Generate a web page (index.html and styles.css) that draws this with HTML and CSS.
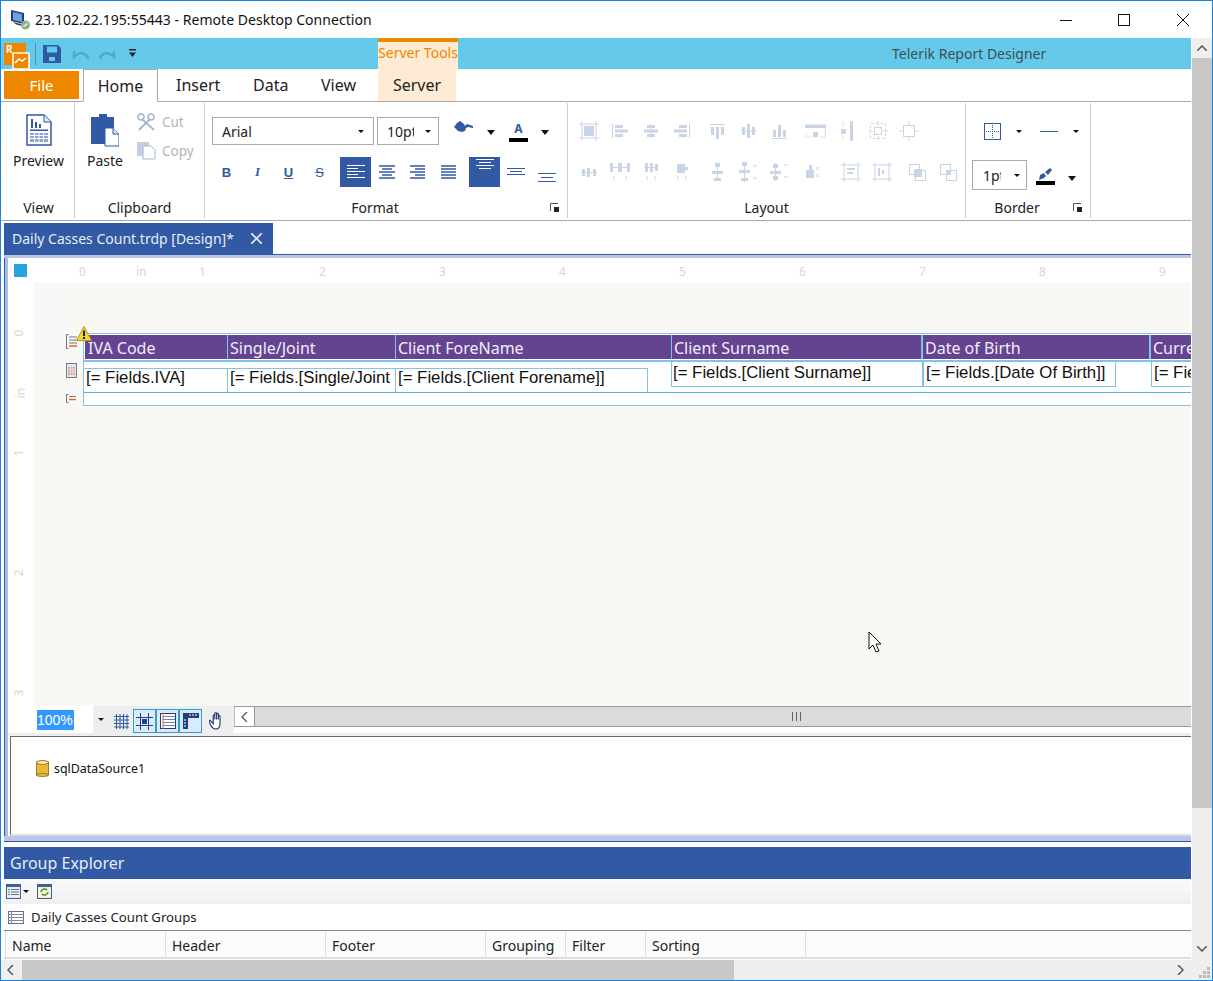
FILE: index.html
```html
<!DOCTYPE html>
<html lang="en">

<head>
    <meta charset="UTF-8">
    <title>23.102.22.195:55443 - Remote Desktop Connection</title>
    <link rel="stylesheet" href="styles.css">
</head>

<body>
    <div class="window">
        <div class="titlebar">
            <svg class="rdp-icon" width="20" height="20" viewBox="0 0 20 20">
                <path d="M0 0l13 3v11L0 11z" fill="#1d3f7c" />
                <path d="M2 2l9 2v8L2 10z" fill="#6f9fe0" />
                <path d="M2 12l10 2.500 3 2.500-10-2.500z" fill="#444" />
                <circle cx="14.500" cy="15" r="4.500" fill="#8fb08a" />
                <path d="M12.500 16.500l4-3" stroke="#fff" stroke-width="1.200" />
            </svg>
            <span class="title-text">23.102.22.195:55443 - Remote Desktop Connection</span>
            <div class="win-btns">
                <svg width="12" height="12" viewBox="0 0 12 12"><path d="M0 6.500h12" stroke="#111" /></svg>
                <svg width="12" height="12" viewBox="0 0 12 12"><rect x=".5" y=".5" width="11" height="11" fill="none" stroke="#111" /></svg>
                <svg class="win-close" width="12" height="12" viewBox="0 0 12 12"><path d="M0 0l12 12M12 0L0 12" stroke="#111" /></svg>
            </div>
        </div>

        <div class="main">
            <div class="app">
                <div class="qat">
                    <div class="qat-left">
                        <svg class="logo" width="26" height="27" viewBox="0 0 26 27">
                            <rect width="22" height="22" fill="#ee8700" />
                            <text x="2" y="10" class="logo-r">R</text>
                            <rect x="9" y="10" width="16" height="16" fill="#ee8700" stroke="#fff" stroke-width="1.500" />
                            <path d="M11 20l4-4 3 2 4-3" fill="none" stroke="#fff" stroke-width="1.500" />
                        </svg>
                        <span class="qat-sep"></span>
                        <svg width="18" height="18" viewBox="0 0 18 18">
                            <path d="M0 0h15l3 3v15H0z" fill="#3259a3" />
                            <rect x="4" y="1.500" width="10" height="6" fill="#65c9ea" />
                            <rect x="6" y="12" width="6" height="4" fill="#65c9ea" />
                        </svg>
                        <svg class="qat-undo" width="18" height="12" viewBox="0 0 18 12">
                            <path d="M17 11c-1-5-6-8-12-4L3 9V3" fill="none" stroke="#3f8fc4" stroke-width="2.500" />
                        </svg>
                        <svg class="qat-redo" width="18" height="12" viewBox="0 0 18 12">
                            <path d="M1 11c1-5 6-8 12-4l2 2V3" fill="none" stroke="#3f8fc4" stroke-width="2.500" />
                        </svg>
                        <svg class="qat-more" width="7" height="9" viewBox="0 0 7 9">
                            <path d="M0 0h7v1.500H0zM0 3.500h7L3.500 8z" fill="#222" />
                        </svg>
                    </div>
                    <div class="ctx-label">Server Tools</div>
                    <div class="app-title">Telerik Report Designer</div>
                </div>

                <div class="tabs">
                    <div class="tab-file">File</div>
                    <div class="tab tab-active">Home</div>
                    <div class="tab tab-insert">Insert</div>
                    <div class="tab tab-data">Data</div>
                    <div class="tab tab-view">View</div>
                    <div class="tab tab-server">Server</div>
                </div>

                <div class="ribbon">
                    <div class="group group-view">
                        <div class="group-body big-btn">
                            <svg width="26" height="32" viewBox="0 0 26 32">
                                <path d="M1 1h17l7 7v23H1z" fill="#fff" stroke="#3259a3" stroke-width="1.500" />
                                <path d="M18 1v7h7" fill="#dfe6f3" stroke="#3259a3" />
                                <path d="M5 5v9h2V5zM9 8v6h2V8zM13 10v4h2v-4z" fill="#3259a3" />
                                <path d="M4 15.500h18v1.500H4z" fill="#3259a3" />
                                <path d="M4 19h18v9H4z" fill="#8ba3d0" />
                                <path d="M4 21.500h18M4 24.500h18M8.500 19v9M13 19v9M17.500 19v9" stroke="#fff" />
                            </svg>
                            <span>Preview</span>
                        </div>
                        <div class="group-label">View</div>
                    </div>

                    <div class="group group-clip">
                        <div class="group-body clip-body">
                            <div class="big-btn paste-btn">
                                <svg width="28" height="33" viewBox="0 0 28 33">
                                    <path d="M0 3h8V0h8v3h7v27H0z" fill="#3259a3" />
                                    <path d="M14 14h8l6 6v12H14z" fill="#fff" stroke="#3259a3" />
                                    <path d="M22 14v6h6" fill="#dfe6f3" stroke="#3259a3" />
                                </svg>
                                <span>Paste</span>
                            </div>
                            <div class="clip-small">
                                <div class="small-btn">
                                    <svg width="19" height="18" viewBox="0 0 19 18">
                                        <circle cx="4" cy="4" r="3" fill="none" stroke="#a4b4d4" stroke-width="1.500" />
                                        <circle cx="14" cy="4" r="3" fill="none" stroke="#a4b4d4" stroke-width="1.500" />
                                        <path d="M5 6l12 11M13 6L2 17" stroke="#a4b4d4" stroke-width="1.800" />
                                    </svg>
                                    <span>Cut</span>
                                </div>
                                <div class="small-btn">
                                    <svg width="19" height="18" viewBox="0 0 19 18">
                                        <rect x="0" y="0" width="12" height="14" fill="#c4cfe4" />
                                        <path d="M6 4h8l4 4v9H6z" fill="#fff" stroke="#a4b4d4" />
                                    </svg>
                                    <span>Copy</span>
                                </div>
                            </div>
                        </div>
                        <div class="group-label">Clipboard</div>
                    </div>

                    <div class="group group-format">
                        <div class="group-body format-body">
                            <div class="format-row1">
                                <div class="combo combo-font"><span>Arial</span><i class="caret-sm"></i></div>
                                <div class="combo combo-size"><span>10pt</span><i class="caret-sm"></i></div>
                                <div class="color-btn color-fill">
                                    <svg width="20" height="14" viewBox="0 0 20 14">
                                        <path d="M0 6l3-4 3-2 4 3 1 2 2-2 6 2v2l-5-1-2 1-1 3-3 1-4-1z" fill="#3259a3" />
                                    </svg>
                                    <i class="caret"></i>
                                </div>
                                <div class="color-btn color-font">
                                    <div class="a-wrap">
                                        <span class="a-mark">A</span>
                                        <span class="color-bar"></span>
                                    </div>
                                    <i class="caret"></i>
                                </div>
                            </div>
                            <div class="format-row2">
                                <div class="fmt-set fmt-style">
                                    <div class="fmt fmt-b">B</div>
                                    <div class="fmt fmt-i">I</div>
                                    <div class="fmt fmt-u">U</div>
                                    <div class="fmt fmt-s">S</div>
                                </div>
                                <div class="fmt-set">
                                    <div class="fmt on">
                                        <svg width="18" height="15" viewBox="0 0 18 15"><path d="M0 .500h18M0 3.500h11M0 6.500h18M0 9.500h11M0 12.500h18" stroke="#fff" /></svg>
                                    </div>
                                    <div class="fmt">
                                        <svg width="16" height="15" viewBox="0 0 16 15"><path d="M0 1h16M3 4h10M0 7h16M3 10h10M0 13h16" stroke="#3259a3" stroke-width="1.300" /></svg>
                                    </div>
                                    <div class="fmt">
                                        <svg width="15" height="15" viewBox="0 0 15 15"><path d="M0 1h15M5 4h10M0 7h15M5 10h10M0 13h15" stroke="#3259a3" stroke-width="1.300" /></svg>
                                    </div>
                                    <div class="fmt">
                                        <svg width="15" height="15" viewBox="0 0 15 15"><path d="M0 1h15M0 4h15M0 7h15M0 10h15M0 13h15" stroke="#3259a3" stroke-width="1.300" /></svg>
                                    </div>
                                </div>
                                <div class="fmt-set">
                                    <div class="fmt on fmt-top">
                                        <svg width="18" height="11" viewBox="0 0 18 11"><path d="M0 .500h18M3 3.500h12M0 6.500h18M3 9.500h12" stroke="#fff" /></svg>
                                    </div>
                                    <div class="fmt">
                                        <svg width="18" height="10" viewBox="0 0 18 10"><path d="M0 1.500h18M3 4.500h12M0 7.500h18" stroke="#3259a3" /></svg>
                                    </div>
                                    <div class="fmt fmt-bot">
                                        <svg width="18" height="9" viewBox="0 0 18 9"><path d="M0 .500h18M3 4.500h12M0 8.500h18" stroke="#3259a3" /></svg>
                                    </div>
                                </div>
                            </div>
                        </div>
                        <div class="group-label label-launch">Format</div>
                        <svg class="launcher" width="9" height="9" viewBox="0 0 9 9">
                            <path d="M.500 8V.500H8" fill="none" stroke="#555" />
                            <path d="M4 4h5v5H4z" fill="#222" />
                        </svg>
                    </div>

                    <div class="group group-layout">
                        <div class="group-body layout-body">
                            <div class="layout-row">
                                <div class="lay-set">
                                    <div class="lay"><svg width="20" height="20" viewBox="0 0 20 20"><path d="M3 0v20M17 0v20M0 3h20M0 17h20" stroke="#3259a3" /><rect x="5" y="5" width="10" height="10" fill="#3259a3" /></svg></div>
                                    <div class="lay"><svg width="16" height="14" viewBox="0 0 16 14"><path d="M.500 0v14" stroke="#3259a3" /><path d="M3 1h8v3H3zM3 5.500h13v3H3zM3 10h8v3H3z" fill="#3259a3" /></svg></div>
                                    <div class="lay"><svg width="14" height="14" viewBox="0 0 14 14"><path d="M7 0v14" stroke="#3259a3" /><path d="M3 1h8v3H3zM0 5.500h14v3H0zM3 10h8v3H3z" fill="#3259a3" /></svg></div>
                                    <div class="lay"><svg width="16" height="14" viewBox="0 0 16 14"><path d="M15.500 0v14" stroke="#3259a3" /><path d="M5 1h8v3H5zM0 5.500h13v3H0zM5 10h8v3H5z" fill="#3259a3" /></svg></div>
                                </div>
                                <div class="lay-set">
                                    <div class="lay"><svg width="15" height="15" viewBox="0 0 15 15"><path d="M0 .500h15" stroke="#3259a3" /><path d="M1 3h3v8H1zM6 3h3v12H6zM11 3h3v8h-3z" fill="#3259a3" /></svg></div>
                                    <div class="lay"><svg width="15" height="14" viewBox="0 0 15 14"><path d="M0 7h15" stroke="#3259a3" /><path d="M1 3h3v8H1zM6 0h3v14H6zM11 3h3v8h-3z" fill="#3259a3" /></svg></div>
                                    <div class="lay"><svg width="15" height="15" viewBox="0 0 15 15"><path d="M0 14.500h15" stroke="#3259a3" /><path d="M1 6h3v7H1zM6 1h3v12H6zM11 6h3v7h-3z" fill="#3259a3" /></svg></div>
                                </div>
                                <div class="lay-set">
                                    <div class="lay"><svg width="21" height="15" viewBox="0 0 21 15"><path d="M.500 1h20v10" fill="none" stroke="#3259a3" /><path d="M0 1h21v3H0z" fill="#3259a3" /><rect x="8" y="8" width="5" height="5" fill="#3259a3" /><path d="M1 10v4M20 10v4M2 13h4M15 13h4" stroke="#ee8700" /></svg></div>
                                    <div class="lay"><svg width="15" height="20" viewBox="0 0 15 20"><path d="M11 0h3v20h-3z" fill="#3259a3" /><rect x="2" y="8" width="5" height="5" fill="#3259a3" /><path d="M4 0v6M4 14v6" stroke="#ee8700" /></svg></div>
                                    <div class="lay"><svg width="20" height="20" viewBox="0 0 20 20"><rect x="2.500" y="2.500" width="15" height="15" fill="none" stroke="#3259a3" stroke-dasharray="3 2" /><rect x="6.500" y="6.500" width="7" height="7" fill="none" stroke="#3259a3" /><path d="M10 0v5M10 15v5M0 10h5M15 10h5" stroke="#ee8700" stroke-width="1.500" /></svg></div>
                                    <div class="lay"><svg width="20" height="20" viewBox="0 0 20 20"><rect x="4.500" y="4.500" width="11" height="11" fill="none" stroke="#3259a3" /><path d="M10 0v4M10 16v4M0 10h4M16 10h4" stroke="#ee8700" stroke-width="1.500" /></svg></div>
                                </div>
                            </div>
                            <div class="layout-row">
                                <div class="lay-set">
                                    <div class="lay"><svg width="16" height="9" viewBox="0 0 16 9"><path d="M0 4.500h16" stroke="#3259a3" /><path d="M1 1h3v7H1zM6 0h3v9H6zM12 1h3v7h-3z" fill="#3259a3" /></svg></div>
                                    <div class="lay"><svg width="20" height="18" viewBox="0 0 20 18"><path d="M0 4.500h20" stroke="#3259a3" /><path d="M0 0h3v9H0zM8 0h4v9H8zM17 0h3v9h-3z" fill="#3259a3" /><path d="M5 13l-2 2 2 2M15 13l2 2-2 2" fill="none" stroke="#3259a3" /></svg></div>
                                    <div class="lay"><svg width="14" height="18" viewBox="0 0 14 18"><path d="M0 4.500h14" stroke="#3259a3" /><path d="M1 0h3v9H1zM6 0h3v9H6zM11 1h3v7h-3z" fill="#3259a3" /><path d="M2 13l2 2-2 2M12 13l-2 2 2 2" fill="none" stroke="#3259a3" /></svg></div>
                                    <div class="lay"><svg width="12" height="18" viewBox="0 0 12 18"><path d="M1 1h8v3h3v3H9v3H1z" fill="#3259a3" /><path d="M1 13l2 2-2 2M11 13l-2 2 2 2" fill="none" stroke="#3259a3" /></svg></div>
                                </div>
                                <div class="lay-set">
                                    <div class="lay"><svg width="11" height="18" viewBox="0 0 11 18"><path d="M5.500 0v18" stroke="#3259a3" /><path d="M3 0h5v4H3zM0 8h11v3H0zM2 15h7v3H2z" fill="#3259a3" /></svg></div>
                                    <div class="lay"><svg width="20" height="20" viewBox="0 0 20 20"><path d="M5.500 0v20" stroke="#3259a3" /><path d="M3 0h5v4H3zM0 8h11v3H0zM2 16h7v3H2z" fill="#3259a3" /><path d="M14 5l2-2 2 2M14 15l2 2 2-2" fill="none" stroke="#3259a3" /></svg></div>
                                    <div class="lay"><svg width="20" height="18" viewBox="0 0 20 18"><path d="M5.500 0v18" stroke="#3259a3" /><path d="M3 1h5v4H3zM0 8h11v3H0zM3 13h5v4H3z" fill="#3259a3" /><path d="M14 1l2 2 2-2M14 15l2-2 2 2" fill="none" stroke="#3259a3" /></svg></div>
                                </div>
                                <div class="lay-set lay-narrow">
                                    <div class="lay"><svg width="16" height="16" viewBox="0 0 16 16"><path d="M2 6h3V1h3v5h2v8H2z" fill="#3259a3" /><path d="M12 3l3 3M15 3l-3 3M12 10l3 3M15 10l-3 3" stroke="#3259a3" /></svg></div>
                                </div>
                                <div class="lay-set">
                                    <div class="lay"><svg width="20" height="20" viewBox="0 0 20 20"><path d="M3 0v20M17 0v20M0 3h20M0 17h20" stroke="#3259a3" /><path d="M6 6h8v2H6zM6 10h6v2H6z" fill="#3259a3" /></svg></div>
                                    <div class="lay"><svg width="20" height="20" viewBox="0 0 20 20"><path d="M3 0v20M17 0v20M0 3h20M0 17h20" stroke="#3259a3" /><path d="M6 6h2v8H6zM10 8h2v4h-2z" fill="#3259a3" /></svg></div>
                                </div>
                                <div class="lay-set">
                                    <div class="lay"><svg width="17" height="17" viewBox="0 0 17 17"><rect x=".5" y=".5" width="10" height="10" fill="#fff" stroke="#3259a3" /><rect x="5" y="5" width="8" height="8" fill="#3259a3" /><rect x="6.500" y="6.500" width="10" height="10" fill="none" stroke="#3259a3" /></svg></div>
                                    <div class="lay"><svg width="17" height="17" viewBox="0 0 17 17"><rect x="6.500" y="6.500" width="10" height="10" fill="#fff" stroke="#3259a3" /><rect x=".5" y=".5" width="10" height="10" fill="none" stroke="#3259a3" /><rect x="6" y="6" width="5" height="5" fill="#3259a3" /></svg></div>
                                </div>
                            </div>
                        </div>
                        <div class="group-label">Layout</div>
                    </div>

                    <div class="group group-border">
                        <div class="group-body border-body">
                            <div class="border-row1">
                                <div class="bd-btn">
                                    <svg width="17" height="17" viewBox="0 0 17 17"><rect x=".5" y=".5" width="16" height="16" fill="none" stroke="#3259a3" /><path d="M8.500 0v17M0 8.500h17" stroke="#3259a3" stroke-dasharray="1 1" /></svg>
                                    <i class="caret-sm"></i>
                                </div>
                                <div class="bd-btn">
                                    <svg width="18" height="3" viewBox="0 0 18 3"><path d="M0 1.500h18" stroke="#3259a3" /></svg>
                                    <i class="caret-sm"></i>
                                </div>
                            </div>
                            <div class="border-row2">
                                <div class="combo combo-weight"><span>1pt</span><i class="caret-sm"></i></div>
                                <div class="color-btn color-brush">
                                    <div class="a-wrap">
                                        <svg width="13" height="12" viewBox="0 0 13 12"><path d="M0 12l1-5 4-2 2 3-2 2zM6 4l5-4 2 2-4 5z" fill="#3259a3" /></svg>
                                        <span class="color-bar"></span>
                                    </div>
                                    <i class="caret"></i>
                                </div>
                            </div>
                        </div>
                        <div class="group-label label-launch">Border</div>
                        <svg class="launcher" width="9" height="9" viewBox="0 0 9 9">
                            <path d="M.500 8V.500H8" fill="none" stroke="#555" />
                            <path d="M4 4h5v5H4z" fill="#222" />
                        </svg>
                    </div>
                </div>

                <div class="doc-tabs">
                    <div class="doc-tab">
                        <span>Daily Casses Count.trdp [Design]*</span>
                        <svg width="11" height="11" viewBox="0 0 11 11"><path d="M0 0l11 11M11 0L0 11" stroke="#dfe6f3" stroke-width="1.700" /></svg>
                    </div>
                </div>
                <div class="doc-rule"></div>

                <div class="doc">
                    <div class="doc-inner">
                        <div class="surface">
                            <span class="corner"></span>
                            <div class="paper"></div>
                            <div class="paper-shade"></div>

                            <span class="rt" style="left:82px">0</span>
                            <span class="rt" style="left:139px">in</span>
                            <span class="rt" style="left:202px">1</span>
                            <span class="rt" style="left:322px">2</span>
                            <span class="rt" style="left:442px">3</span>
                            <span class="rt" style="left:562px">4</span>
                            <span class="rt" style="left:682px">5</span>
                            <span class="rt" style="left:802px">6</span>
                            <span class="rt" style="left:922px">7</span>
                            <span class="rt" style="left:1042px">8</span>
                            <span class="rt" style="left:1162px">9</span>

                            <span class="rl" style="top:67px">0</span>
                            <span class="rl" style="top:127px">in</span>
                            <span class="rl" style="top:187px">1</span>
                            <span class="rl" style="top:307px">2</span>
                            <span class="rl" style="top:427px">3</span>

                            <svg class="warn" width="16" height="15" viewBox="0 0 16 15">
                                <path d="M8 .500L15.500 14.500H.500z" fill="#f5d43a" stroke="#b59a1c" />
                                <path d="M7 4.500h2v5.500H7zM7 11h2v2H7z" fill="#222" />
                            </svg>
                            <svg class="band-ico bi1" width="11" height="15" viewBox="0 0 11 15">
                                <path d="M2.500.500H.500v14h2" fill="none" stroke="#6c7a8c" />
                                <path d="M3 3h8M3 6h8M3 9h8" stroke="#6c7a8c" />
                                <path d="M3 12h8" stroke="#e8622a" stroke-width="1.500" />
                            </svg>
                            <svg class="band-ico bi2" width="11" height="15" viewBox="0 0 11 15">
                                <rect x=".5" y=".5" width="10" height="14" fill="#e4e8ee" stroke="#6c7a8c" />
                                <path d="M2 4h7v8H2z" fill="#c9a08c" />
                                <path d="M2 6h7M2 8h7M2 10h7M4.500 4v8M7 4v8" stroke="#fff" stroke-width=".6" />
                            </svg>
                            <svg class="band-ico bi3" width="10" height="9" viewBox="0 0 10 9">
                                <path d="M2.500.500H.500v8h2" fill="none" stroke="#6c7a8c" />
                                <path d="M3 2.500h7" stroke="#6c7a8c" />
                                <path d="M3 5.500h7" stroke="#e8622a" stroke-width="1.500" />
                            </svg>

                            <div class="report">
                                <div class="rep-head">
                                    <div class="hc hc1">IVA Code</div>
                                    <div class="hc hc2">Single/Joint</div>
                                    <div class="hc hc3">Client ForeName</div>
                                    <div class="hc hc4">Client Surname</div>
                                    <div class="hc hc5">Date of Birth</div>
                                    <div class="hc hc6">Curre</div>
                                </div>
                                <div class="rep-detail">
                                    <div class="box b1">[= Fields.IVA]</div>
                                    <div class="box b2">[= Fields.[Single/Joint</div>
                                    <div class="box b3">[= Fields.[Client Forename]]</div>
                                    <div class="box b4">[= Fields.[Client Surname]]</div>
                                    <div class="box b5">[= Fields.[Date Of Birth]]</div>
                                    <div class="box b6">[= Fields</div>
                                </div>
                                <div class="rep-foot"></div>
                            </div>

                            <svg class="cursor" width="14" height="22" viewBox="0 0 14 22">
                                <path d="M1 1v17l4-4 3 7 3-1-3-7h5z" fill="#fff" stroke="#111" />
                            </svg>
                        </div>

                        <div class="strip">
                            <div class="zoom-field"><span>100%</span></div>
                            <div class="zoom-drop"><i class="caret-sm"></i></div>
                            <div class="strip-tools">
                                <div class="st st-grid">
                                    <svg width="15" height="15" viewBox="0 0 15 15"><path d="M2.500 0v15M6 0v15M9.500 0v15M13 0v15M0 2.500h15M0 6h15M0 9.500h15M0 13h15" stroke="#3259a3" /></svg>
                                </div>
                                <div class="st st-on">
                                    <svg width="17" height="17" viewBox="0 0 17 17"><path d="M4.500 0v17M12.500 0v17M0 4.500h17M0 12.500h17" stroke="#1f3f80" /><rect x="6" y="6" width="5" height="5" fill="#1f3f80" /></svg>
                                </div>
                                <div class="st st-on">
                                    <svg width="16" height="16" viewBox="0 0 16 16"><rect x=".5" y=".5" width="15" height="15" fill="#fff" stroke="#1f3f80" /><path d="M3 3.500h12M3 6.500h12M3 9.500h12M3 12.500h12" stroke="#6d86b8" /><path d="M3 0v16" stroke="#e8622a" /></svg>
                                </div>
                                <div class="st st-on">
                                    <svg width="16" height="16" viewBox="0 0 16 16"><path d="M0 0h16v5H5v11H0z" fill="#1f3f80" /><path d="M7 1v2M10 1v2M13 1v2M1 7h2M1 10h2M1 13h2" stroke="#fff" /></svg>
                                </div>
                                <div class="st st-hand">
                                    <svg width="18" height="18" viewBox="0 0 17 17"><path d="M1 8l3 3V3.500c0-1 1.500-1 1.500 0V7V1.500c0-1 1.700-1 1.700 0V7V2c0-1 1.600-1 1.600 0v5V4c0-1 1.600-1 1.600 0v7c0 3-1.500 5-4 5s-3.500-1-4.500-3L0 9c-.5-1 .5-1.500 1-1z" fill="#fff" stroke="#1a2a66" /></svg>
                                </div>
                            </div>
                            <div class="doc-hscroll">
                                <div class="hs-left">
                                    <svg width="7" height="10" viewBox="0 0 7 10"><path d="M6 0L1 5l5 5" fill="none" stroke="#555" stroke-width="1.300" /></svg>
                                </div>
                                <div class="hs-thumb">
                                    <span class="grip"></span>
                                </div>
                            </div>
                        </div>

                        <div class="tray">
                            <svg width="13" height="17" viewBox="0 0 13 17">
                                <rect x=".5" y="2" width="12" height="13" fill="#e8b93a" stroke="#a07b1a" />
                                <ellipse cx="6.500" cy="2.500" rx="6" ry="2" fill="#f7e6a6" stroke="#a07b1a" />
                                <ellipse cx="6.500" cy="15" rx="6" ry="1.500" fill="#e8b93a" stroke="#a07b1a" />
                            </svg>
                            <span>sqlDataSource1</span>
                        </div>
                    </div>
                </div>
                <div class="doc-end"></div>

                <div class="explorer">
                    <div class="exp-head">Group Explorer</div>
                    <div class="exp-tools">
                        <svg width="15" height="15" viewBox="0 0 15 15"><rect x=".5" y=".5" width="14" height="14" fill="#e6eef8" stroke="#3f5f99" /><path d="M0 2h15" stroke="#3f5f99" stroke-width="2" /><path d="M5 5.500h8M5 8h8M5 10.500h8" stroke="#777" /><path d="M2 5.500h2M2 8h2M2 10.500h2" stroke="#4e9a3c" /></svg>
                        <i class="caret-sm"></i>
                        <svg class="exp-refresh" width="15" height="15" viewBox="0 0 15 15"><rect x=".5" y=".5" width="14" height="14" fill="#f4f1d8" stroke="#3f5f99" /><path d="M0 2h15" stroke="#3f5f99" stroke-width="2" /><path d="M4 8a3.500 3.500 0 0 1 6-2M11 8a3.500 3.500 0 0 1-6 2" fill="none" stroke="#3f8f1e" stroke-width="1.500" /></svg>
                    </div>
                    <div class="exp-title">
                        <svg width="16" height="13" viewBox="0 0 16 13"><rect x=".5" y=".5" width="15" height="12" fill="#fff" stroke="#5f6f8a" /><path d="M0 3.500h16M0 6.500h16M0 9.500h16" stroke="#7d8aa0" /><path d="M3.500 0v13" stroke="#7d8aa0" /></svg>
                        <span>Daily Casses Count Groups</span>
                    </div>
                    <div class="exp-grid">
                        <div class="gc gc-first">Name</div>
                        <div class="gc gc-wide">Header</div>
                        <div class="gc gc-wide">Footer</div>
                        <div class="gc gc-narrow">Grouping</div>
                        <div class="gc gc-narrow">Filter</div>
                        <div class="gc gc-wide">Sorting</div>
                    </div>
                </div>
            </div>

            <div class="vscroll">
                <div class="vs-up">
                    <svg width="10" height="6" viewBox="0 0 10 6"><path d="M0 6l5-5 5 5" fill="none" stroke="#555" stroke-width="1.500" /></svg>
                </div>
                <div class="vs-thumb"></div>
                <div class="vs-down">
                    <svg width="10" height="6" viewBox="0 0 10 6"><path d="M0 0l5 5 5-5" fill="none" stroke="#555" stroke-width="1.500" /></svg>
                </div>
            </div>
        </div>

        <div class="hscroll">
            <div class="hsb-left">
                <svg width="7" height="10" viewBox="0 0 7 10"><path d="M6 0L1 5l5 5" fill="none" stroke="#555" stroke-width="1.500" /></svg>
            </div>
            <div class="hsb-thumb"></div>
            <div class="hsb-right">
                <svg width="7" height="10" viewBox="0 0 7 10"><path d="M1 0l5 5-5 5" fill="none" stroke="#555" stroke-width="1.500" /></svg>
            </div>
            <svg class="size-grip" width="12" height="12" viewBox="0 0 12 12">
                <path d="M8 0h3v3H8zM4 4h3v3H4zM8 4h3v3H8zM0 8h3v3H0zM4 8h3v3H4zM8 8h3v3H8z" fill="#bbb" />
            </svg>
        </div>
    </div>
</body>

</html>
```

FILE: styles.css
```css
* {
    padding: 0;
    margin: 0;
    box-sizing: border-box;
}

body {
    background: #fff;
    font-family: "Noto Sans", "Open Sans", sans-serif;
    color: #222;
    overflow: hidden;
}

.window {
    width: 1213px;
    height: 981px;
    border: 1px solid #1883d7;
    display: flex;
    flex-direction: column;
    overflow: hidden;
    background: #fff;
}

/* title bar */
.titlebar {
    height: 37px;
    flex: none;
    display: flex;
    align-items: center;
    padding-left: 10px;
}

.rdp-icon {
    margin-right: 4px;
}

.title-text {
    font-size: 14px;
    letter-spacing: .04px;
    color: #111;
}

.win-btns {
    margin-left: auto;
    display: flex;
    gap: 46px;
    padding-right: 23px;
}

.win-close {
    margin-left: 1px;
}

.main {
    height: 922px;
    flex: none;
    display: flex;
}

.app {
    width: 1190px;
    flex: none;
    display: flex;
    flex-direction: column;
}

/* quick access bar */
.qat {
    height: 31px;
    flex: none;
    display: flex;
    background: #65c9ea;
}

.qat-left {
    width: 377px;
    display: flex;
    align-items: center;
    padding-left: 3px;
}

.logo {
    margin-top: 6px;
    overflow: visible;
}

.logo-r {
    font: bold 10px "Noto Sans", sans-serif;
    fill: #fff;
}

.qat-sep {
    width: 1px;
    height: 22px;
    background: #5d8ea8;
    margin: 0 7px 0 5px;
}

.qat-undo {
    margin-left: 10px;
    opacity: .55;
}

.qat-redo {
    margin-left: 10px;
    opacity: .55;
}

.qat-more {
    margin-left: 12px;
}

.ctx-label {
    width: 80px;
    background: #feebd3;
    border-top: 4px solid #ee8700;
    color: #ee8700;
    font-size: 14px;
    line-height: 22px;
    text-align: center;
    white-space: nowrap;
}

.app-title {
    flex: 1;
    padding-left: 434px;
    font-size: 14px;
    line-height: 31px;
    color: #3f4f58;
}

/* ribbon tabs */
.tabs {
    height: 33px;
    flex: none;
    display: flex;
    align-items: stretch;
    border-bottom: 1px solid #aaa;
    padding-left: 3px;
}

.tab-file {
    width: 75px;
    height: 28px;
    margin-top: 2px;
    background: #ee8700;
    color: #fff;
    font-size: 15px;
    line-height: 28px;
    text-align: center;
}

.tab {
    font-size: 16px;
    line-height: 33px;
    color: #222;
}

.tab-active {
    width: 75px;
    height: 33px;
    margin-left: 4px;
    text-align: center;
    background: #fff;
    border: 1px solid #aaa;
    border-bottom: 1px solid #fff;
    line-height: 32px;
}

.tab-insert {
    margin-left: 18px;
    width: 77px;
}

.tab-data {
    width: 68px;
}

.tab-view {
    width: 57px;
}

.tab-server {
    width: 78px;
    text-align: center;
    background: #feebd3;
}

/* ribbon */
.ribbon {
    height: 119px;
    flex: none;
    display: flex;
    border-bottom: 1px solid #aaa;
    padding-left: 2px;
}

.group {
    position: relative;
    display: flex;
    flex-direction: column;
    height: 115px;
    margin-top: 1px;
    border-right: 1px solid #ccc;
}

.group-view {
    width: 72px;
}

.group-clip {
    width: 130px;
}

.group-format {
    width: 363px;
}

.group-layout {
    width: 398px;
}

.group-border {
    width: 125px;
}

.group-body {
    flex: 1;
    min-height: 0;
}

.group-label {
    font-size: 14px;
    line-height: 20px;
    height: 20px;
    flex: none;
    text-align: center;
    color: #222;
}

.label-launch {
    padding-right: 22px;
}

.launcher {
    position: absolute;
    right: 8px;
    bottom: 6px;
}

.big-btn {
    display: flex;
    flex-direction: column;
    align-items: center;
    padding-top: 11px;
    font-size: 14px;
}

.big-btn span {
    margin-top: 5px;
}

.clip-body {
    display: flex;
}

.paste-btn {
    width: 60px;
}

.paste-btn span {
    margin-top: 4px;
}

.clip-small {
    padding-top: 4px;
    margin-left: 2px;
}

.small-btn {
    display: flex;
    align-items: center;
    gap: 6px;
    height: 29px;
    font-size: 13.500px;
    color: #b4b4b4;
}

/* format group */
.format-body {
    padding: 14px 0 0 7px;
}

.format-row1 {
    display: flex;
    align-items: center;
    height: 28px;
}

.combo {
    height: 28px;
    border: 1px solid #aaa;
    display: flex;
    align-items: center;
    justify-content: space-between;
    font-size: 14px;
    background: #fff;
}

.combo span {
    overflow: hidden;
    white-space: nowrap;
}

.combo-font {
    width: 162px;
    padding: 0 9px;
}

.combo-size {
    width: 62px;
    margin-left: 3px;
    padding: 0 7px 0 9px;
}

.combo-size span {
    width: 27px;
}

.caret {
    display: block;
    border-left: 4px solid transparent;
    border-right: 4px solid transparent;
    border-top: 5px solid #111;
}

.caret-sm {
    display: block;
    border-left: 3px solid transparent;
    border-right: 3px solid transparent;
    border-top: 3px solid #111;
}

.color-btn {
    display: flex;
    align-items: center;
}

.color-fill {
    margin-left: 15px;
    margin-top: -7px;
}

.color-fill .caret {
    margin: 10px 0 0 13px;
}

.color-font {
    margin-left: 14px;
    margin-top: 2px;
}

.a-wrap {
    display: flex;
    flex-direction: column;
    align-items: center;
    width: 19px;
}

.a-mark {
    color: #3259a3;
    font-size: 12px;
    font-weight: 700;
    line-height: 14px;
}

.color-bar {
    display: block;
    width: 19px;
    height: 4px;
    background: #000;
    margin-top: 2px;
}

.color-font .caret {
    margin: 0 0 0 13px;
}

.format-row2 {
    display: flex;
    gap: 5px;
    margin-top: 12px;
    margin-left: -1px;
}

.fmt-set {
    display: flex;
}

.fmt {
    width: 31px;
    height: 30px;
    display: flex;
    align-items: center;
    justify-content: center;
    color: #3259a3;
    font-size: 13px;
    font-family: "Liberation Sans", sans-serif;
}

.fmt.on {
    background: #3259a3;
}

.fmt-b {
    font-weight: 700;
}

.fmt-i {
    font-style: italic;
    font-family: "Liberation Serif", serif;
    font-weight: 700;
}

.fmt-u {
    text-decoration: underline;
    font-weight: 700;
}

.fmt-s {
    text-decoration: line-through;
}

.fmt-top {
    align-items: flex-start;
    padding-top: 2px;
}

.fmt-bot {
    align-items: flex-end;
    padding-bottom: 5px;
}

/* layout group */
.layout-body {
    padding: 13px 0 0 5px;
}

.layout-row {
    display: flex;
    gap: 5px;
    height: 30px;
    margin-bottom: 11px;
}

.lay-set {
    display: flex;
}

.lay-narrow {
    margin-right: 3px;
    margin-left: -4px;
}

.lay {
    width: 31px;
    height: 30px;
    display: flex;
    align-items: center;
    justify-content: center;
    opacity: .25;
}

/* border group */
.border-body {
    padding: 10px 0 0 6px;
}

.border-row1 {
    display: flex;
    height: 36px;
}

.bd-btn {
    width: 56px;
    display: flex;
    align-items: center;
    padding-left: 12px;
    gap: 15px;
}

.bd-btn svg:first-child {
    flex: none;
}

.border-row2 {
    display: flex;
    margin-top: 11px;
    align-items: flex-start;
}

.combo-weight {
    width: 55px;
    height: 30px;
    padding: 0 6px 0 10px;
}

.combo-weight span {
    width: 18px;
}

.color-brush {
    margin-left: 9px;
    margin-top: 8px;
}

.color-brush .color-bar {
    margin-top: 1px;
}

.color-brush .caret {
    margin: 3px 0 0 13px;
}

/* document tab */
.doc-tabs {
    height: 33px;
    flex: none;
    padding: 2px 0 0 3px;
}

.doc-tab {
    width: 269px;
    height: 31px;
    background: #3259a3;
    color: #e8edf6;
    font-size: 14px;
    display: flex;
    align-items: center;
    justify-content: space-between;
    padding: 0 11px 0 8px;
}

.doc-rule {
    height: 4px;
    flex: none;
    margin-left: 3px;
    background: #b9c7e5;
    border-top: 1px solid #3259a3;
}

.doc {
    margin-left: 3px;
    border-left: 1px solid #3259a3;
    flex: none;
}

.doc-inner {
    border-left: 3px solid #a9bde0;
    display: flex;
    flex-direction: column;
}

.doc-end {
    height: 6px;
    flex: none;
    margin-left: 3px;
    background: #b9c7e5;
    border-bottom: 1px solid #3259a3;
}

/* design surface, everything on it sits at its own place */
.surface {
    position: relative;
    height: 448px;
    overflow: hidden;
    background: #fff;
}

.corner {
    position: absolute;
    left: 6px;
    top: 6px;
    width: 13px;
    height: 13px;
    background: #25a2e0;
}

.paper {
    position: absolute;
    left: 25px;
    top: 25px;
    right: 0;
    bottom: 0;
    background: #f9f8f5;
}

.paper-shade {
    position: absolute;
    left: 25px;
    top: 36px;
    width: 32px;
    height: 65px;
    background: #f8f8f9;
}

.rt {
    position: absolute;
    top: 6px;
    margin-left: -11px;
    font-size: 12px;
    line-height: 16px;
    color: #d9d6cd;
}

.rl {
    position: absolute;
    left: 8px;
    font-size: 12px;
    line-height: 16px;
    color: #d9d6cd;
    transform: rotate(-90deg);
}

.warn {
    position: absolute;
    left: 68px;
    top: 68px;
    z-index: 2;
}

.band-ico {
    position: absolute;
}

.bi1 {
    left: 58px;
    top: 76px;
}

.bi2 {
    left: 58px;
    top: 105px;
}

.bi3 {
    left: 58px;
    top: 136px;
}

.report {
    position: absolute;
    left: 75px;
    top: 75px;
    width: 1110px;
    font-family: "Liberation Sans", sans-serif;
}

.rep-head {
    height: 28px;
    display: flex;
    background: #fff;
    border: 1px solid #7fc4e8;
    padding: 1px 0 0 1px;
    border-right: 0;
}

.hc {
    height: 24px;
    background: #644491;
    color: #f1edf7;
    font-family: "Noto Sans", sans-serif;
    font-size: 16px;
    line-height: 26px;
    padding-left: 2px;
    border-right: 1px solid #7fc4e8;
    white-space: nowrap;
    overflow: hidden;
}

.hc1 {
    width: 143px;
    padding-left: 3px;
}

.hc2 {
    width: 168px;
}

.hc3 {
    width: 276px;
}

.hc4 {
    width: 251px;
    border-right-width: 2px;
}

.hc5 {
    width: 228px;
    border-right-width: 2px;
}

.hc6 {
    flex: 1;
}

.rep-detail {
    position: relative;
    height: 32px;
    background: #fff;
    border-left: 1px solid #7fc4e8;
    border-bottom: 1px solid #52b6e4;
    border-top: 1px solid #7fc4e8;
}

.box {
    position: absolute;
    border: 1px solid #7fc4e8;
    font-size: 16.800px;
    line-height: 18px;
    padding-left: 2px;
    color: #111;
    white-space: nowrap;
    overflow: hidden;
    background: #fff;
}

.b1 {
    left: 0;
    top: 6px;
    width: 144px;
    height: 24px;
    border-left: 0;
    border-bottom: 0;
}

.b2 {
    left: 143px;
    top: 6px;
    width: 169px;
    height: 24px;
    border-bottom: 0;
}

.b3 {
    left: 311px;
    top: 6px;
    width: 253px;
    height: 24px;
    border-bottom: 0;
}

.b4 {
    left: 587px;
    top: 0;
    width: 252px;
    height: 25px;
    border-top: 0;
    padding-left: 1px;
    padding-top: 2px;
}

.b5 {
    left: 839px;
    top: 0;
    width: 193px;
    height: 25px;
    border-top: 0;
    padding-top: 2px;
}

.b6 {
    left: 1067px;
    top: 0;
    width: 60px;
    height: 25px;
    border-top: 0;
    padding-top: 2px;
}

.rep-foot {
    height: 13px;
    background: #fff;
    border-left: 1px solid #7fc4e8;
    border-bottom: 1px solid #7fc4e8;
}

.cursor {
    position: absolute;
    left: 860px;
    top: 373px;
}

/* strip under the surface */
.strip {
    height: 30px;
    flex: none;
    display: flex;
    background: #fff;
    border-bottom: 3px solid #eee;
}

.zoom-field {
    width: 85px;
    padding: 4px 0 0 29px;
}

.zoom-field span {
    display: block;
    width: 37px;
    height: 20px;
    background: #3399ff;
    color: #fff;
    font-family: "Liberation Sans", sans-serif;
    font-size: 14px;
    line-height: 20px;
    white-space: nowrap;
}

.zoom-drop {
    width: 15px;
    height: 27px;
    background: #eee;
    display: flex;
    align-items: center;
    justify-content: center;
}

.strip-tools {
    width: 126px;
    height: 27px;
    display: flex;
    align-items: center;
    background: #eee;
    padding-left: 3px;
}

.st {
    width: 23px;
    height: 24px;
    flex: none;
    margin-top: 3px;
    display: flex;
    align-items: center;
    justify-content: center;
}

.st-grid {
    width: 22px;
    padding-right: 1px;
}

.st-on {
    background: #daeaf9;
    border: 1px solid #2a9fd8;
}

.st-hand {
    width: 32px;
}

.doc-hscroll {
    flex: 1;
    height: 21px;
    display: flex;
    background: #dbdbdb;
    border-top: 1px solid #999;
    border-bottom: 1px solid #999;
}

.hs-left {
    width: 21px;
    background: #fff;
    border-left: 1px solid #bbb;
    border-right: 1px solid #999;
    display: flex;
    align-items: center;
    justify-content: center;
}

.hs-thumb {
    flex: 1;
    display: flex;
    align-items: center;
    justify-content: center;
    padding-left: 146px;
}

.grip {
    width: 9px;
    height: 9px;
    background: repeating-linear-gradient(90deg, #666 0 1px, transparent 1px 4px);
}

.tray {
    height: 100px;
    flex: none;
    display: flex;
    align-items: flex-start;
    gap: 5px;
    padding: 23px 0 0 25px;
    background: #fff;
    border-top: 1px solid #666;
    border-left: 1px solid #666;
    margin-left: 2px;
    border-bottom: 2px solid #ddd;
    font-size: 12.400px;
    line-height: 17px;
    color: #111;
}

/* group explorer */
.explorer {
    margin: 5px 0 0 3px;
    flex: 1;
    min-height: 0;
    overflow: hidden;
    display: flex;
    flex-direction: column;
}

.exp-head {
    height: 32px;
    flex: none;
    background: #3259a3;
    color: #e8edf6;
    font-size: 16px;
    line-height: 32px;
    padding-left: 6px;
}

.exp-tools {
    height: 25px;
    flex: none;
    display: flex;
    align-items: center;
    padding-left: 2px;
    gap: 2px;
    background: linear-gradient(#fafafa, #f0f0f0);
}

.exp-refresh {
    margin-left: 6px;
}

.exp-title {
    height: 26px;
    flex: none;
    display: flex;
    align-items: center;
    gap: 7px;
    padding-left: 4px;
    font-size: 13.200px;
}

.exp-grid {
    height: 29px;
    flex: none;
    display: flex;
    background: #fbfbfb;
    border-top: 1px solid #7e8790;
    border-bottom: 2px solid #ddd;
    padding-left: 1px;
}

.gc {
    font-size: 14px;
    line-height: 29px;
    padding-left: 6px;
    border-right: 1px solid #ddd;
}

.gc-first {
    width: 161px;
    border-left: 1px solid #ddd;
}

.gc-wide {
    width: 160px;
}

.gc-narrow {
    width: 80px;
}

/* outer scroll bars */
.vscroll {
    flex: 1;
    display: flex;
    flex-direction: column;
    margin-left: 1px;
    background: #efefef;
}

.vs-up {
    height: 20px;
    flex: none;
    display: flex;
    align-items: center;
    justify-content: center;
}

.vs-thumb {
    height: 750px;
    flex: none;
    background: #c8c8c8;
}

.vs-down {
    margin-top: 138px;
    display: flex;
    justify-content: center;
}

.hscroll {
    position: relative;
    flex: 1;
    display: flex;
    align-items: center;
    background: #efefef;
}

.hsb-left {
    width: 21px;
    flex: none;
    padding-left: 6px;
    display: flex;
}

.hsb-thumb {
    width: 712px;
    height: 100%;
    flex: none;
    background: #c8c8c8;
}

.hsb-right {
    margin-left: auto;
    margin-right: 28px;
    display: flex;
}

.size-grip {
    position: absolute;
    right: 1px;
    bottom: 1px;
}
```
